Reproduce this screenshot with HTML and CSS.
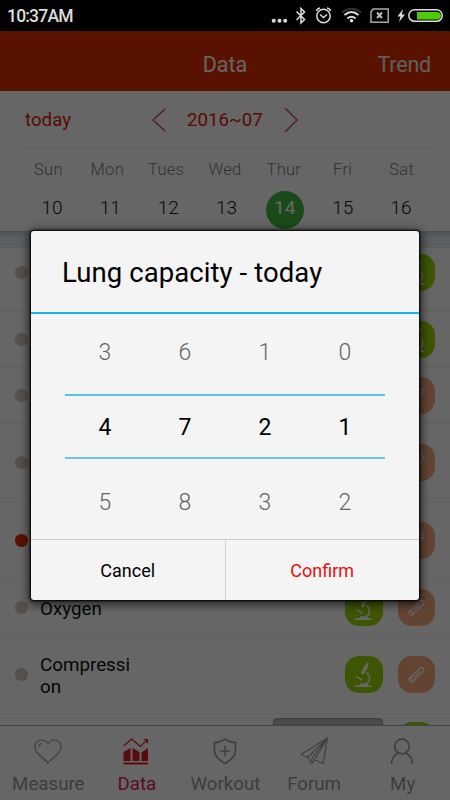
FILE: index.html
```html
<!DOCTYPE html>
<html lang="en">
<head>
<meta charset="utf-8">
<title>Data</title>
<link rel="stylesheet" href="styles.css">
</head>
<body>
<svg class="defs" width="0" height="0">
  <symbol id="microscope" viewBox="0 0 38 38">
    <path d="M21.500 10.500L18 17" stroke-width="3.400"/>
    <path d="M23 7.500L21.500 10.500" stroke-width="2.200"/>
    <path d="M22 17C26 20 26 25.500 21 29M12 21L17 24.200" stroke-width="1.500"/>
    <path d="M11 30.500H26M16 28.800H22" stroke-width="1.700"/>
  </symbol>
  <symbol id="pen" viewBox="0 0 38 38">
    <path d="M11.500 22.500L22.500 12Q24 11 25.500 12.500Q27 14 26 15.500L15 26Q13 27 11.500 25.500Q10.500 24 11.500 22.500ZM16 21.500L22.500 15.500M12 22.500Q14.500 22.500 15 25.500" stroke-width="1.300"/>
  </symbol>
</svg>
<div class="phone">
  <div class="status">
    <span class="time">10:37AM</span>
    <svg class="status-icons" viewBox="0 0 180 31" width="180" height="31">
      <g fill="#ddd"><circle cx="3.700" cy="20.700" r="2"/><circle cx="9.500" cy="20.700" r="2"/><circle cx="15.200" cy="20.700" r="2"/></g>
      <g fill="none" stroke="#ddd" stroke-width="1.500">
        <path d="M26.500 11.500L34.500 19.500L31 23V8.500L34.500 12L26.500 20"/>
        <circle cx="53.500" cy="16" r="6.700"/><path d="M50 14.500L53.500 17.500L57 14.500M46.500 11Q47 8.500 50 8M60.500 11Q60 8.500 57 8"/>
        <path d="M72 12.500Q81.500 5 91 12.500" stroke="#333" stroke-width="2"/>
        <path d="M74.500 15Q81.500 9 88.500 15M77.500 18.500Q81.500 15 85.500 18.500" stroke-width="2.100"/>
        <path d="M103 9H118.200V22.200H101V12Z" stroke="#aaa"/><path d="M107 12.500L112 18M112 12.500L107 18" stroke="#bbb" stroke-width="2"/>
        <rect x="138.800" y="9.800" width="33.500" height="11.500" rx="5.700"/>
      </g>
      <circle cx="81.500" cy="20.700" r="1.800" fill="#ddd"/>
      <path d="M133 9L127.500 16.500H130.500L129 22L135 14.500H131.800Z" fill="#ddd"/>
      <path d="M147 12H167.500Q171 12.500 171 15.500Q171 19 167.500 19.500H147Z" fill="#4ccc04"/>
    </svg>
  </div>
  <div class="app">
    <header class="bar"><span class="bar-title">Data</span><span class="bar-link">Trend</span></header>
    <section class="calendar">
      <div class="month">
        <span class="today">today</span>
        <svg class="prev" width="14" height="24" viewBox="0 0 14 24"><path d="M13 1L1 12L13 23"/></svg>
        <span class="period">2016~07</span>
        <svg class="next" width="14" height="24" viewBox="0 0 14 24"><path d="M1 0L13 12L1 24"/></svg>
      </div>
      <div class="weekdays"><span>Sun</span><span>Mon</span><span>Tues</span><span>Wed</span><span>Thur</span><span>Fri</span><span>Sat</span></div>
      <div class="days"><span>10</span><span>11</span><span>12</span><span>13</span><span class="selected">14</span><span>15</span><span>16</span></div>
    </section>
    <div class="gap"></div>
    <main class="list">
      <div class="row tall first"><i class="dot"></i><span class="name"></span><svg class="badge green end"><use href="#microscope"/></svg></div>
      <div class="row"><i class="dot"></i><span class="name"></span><svg class="badge green end"><use href="#microscope"/></svg></div>
      <div class="row"><i class="dot"></i><span class="name"></span><svg class="badge orange"><use href="#pen"/></svg></div>
      <div class="row tall"><i class="dot"></i><span class="name"></span><svg class="badge orange"><use href="#pen"/></svg></div>
      <div class="row tall"><i class="dot on"></i><span class="name"></span><svg class="badge orange"><use href="#pen"/></svg></div>
      <div class="row"><i class="dot"></i><span class="name">Oxygen</span><svg class="badge green"><use href="#microscope"/></svg><svg class="badge orange"><use href="#pen"/></svg></div>
      <div class="row tall"><i class="dot"></i><span class="name">Compressi<br>on</span><svg class="badge green"><use href="#microscope"/></svg><svg class="badge orange"><use href="#pen"/></svg></div>
      <div class="row last"><span class="chip"></span><svg class="badge green"></svg></div>
    </main>
    <nav class="tabs">
      <div class="tab"><svg width="30" height="30" viewBox="0 0 30 30"><path d="M15 27L4.500 17C-1 11 3 4 9 4Q13 4 15 7.500Q17 4 21 4C27 4 31 11 25.500 17ZM5.500 11Q6 8 9 7.500"/></svg><span>Measure</span></div>
      <div class="tab active"><svg width="30" height="30" viewBox="0 0 30 30"><path d="M2.500 10L10.500 3L19.500 10.500L26 4M22.500 3.500H26.500V7.500"/><path class="solid" d="M2.500 25V16L9.500 12V25ZM11.500 25V12L18.500 16V25ZM20.500 25V16.500L27 12V25ZM2.500 26.500H27V28.500H2.500Z"/></svg><span>Data</span></div>
      <div class="tab"><svg width="30" height="30" viewBox="0 0 30 30" class="bold"><path d="M15 3Q20 6.500 25.500 6.500V15Q25 22 15 27.500Q5 22 4.500 15V6.500Q10 6.500 15 3ZM15 10V20M10 15H20"/></svg><span>Workout</span></div>
      <div class="tab"><svg width="30" height="30" viewBox="0 0 30 30"><path d="M28.500 2L2 18.500L8.500 21.500L13 27.500L15.500 24L24 27.500ZM28.500 2L8.500 21.500M28.500 2L13 22.500V27.500M28.500 2L15.500 24"/></svg><span>Forum</span></div>
      <div class="tab"><svg width="30" height="30" viewBox="0 0 30 30" class="bold"><circle cx="15" cy="10.500" r="7.300"/><path d="M4.500 28Q4.500 20.500 11 17.300M25.500 28Q25.500 20.500 19 17.300"/></svg><span>My</span></div>
    </nav>
  </div>
  <div class="overlay">
    <div class="dialog">
      <h1 class="title">Lung capacity - today</h1>
      <div class="picker">
        <div class="digits faded up"><span>3</span><span>6</span><span>1</span><span>0</span></div>
        <div class="digits current"><span>4</span><span>7</span><span>2</span><span>1</span></div>
        <div class="digits faded down"><span>5</span><span>8</span><span>3</span><span>2</span></div>
      </div>
      <div class="actions"><span class="cancel">Cancel</span><span class="confirm">Confirm</span></div>
    </div>
  </div>
</div>
</body>
</html>
```
FILE: styles.css
```css
* { box-sizing: border-box; }
body { margin: 0; font-family: Roboto, "Liberation Sans", sans-serif; font-weight: 300; }
.defs { position: absolute; }
.phone { position: relative; width: 450px; height: 800px; overflow: hidden; display: flex; flex-direction: column; }
.status { height: 31px; flex: none; background: #000; display: flex; align-items: center; padding-left: 7px; }
.time { flex: 1; color: #ddd; font-size: 17.5px; font-weight: 500; line-height: 31px; padding-top: 1px; letter-spacing: -.8px; }
.app { flex: 1; min-height: 0; display: flex; flex-direction: column; background: #fff; }
.bar { height: 60px; flex: none; background: linear-gradient(#ce2700, #e22d00 4px); display: grid; grid-template-columns: 1fr auto 1fr; align-items: center; color: #fff; font-size: 21.5px; font-weight: 400; padding: 6px 19px 0; }
.bar-title { grid-column: 2; }
.bar-link { justify-self: end; color: #eee; letter-spacing: -.2px; }
.calendar { height: 140px; flex: none; }
.month { height: 57px; display: flex; align-items: center; padding-left: 25px; color: #dd2000; font-size: 18.7px; font-weight: 400; }
.month svg { fill: none; stroke: #c65070; stroke-width: 1.5; }
.today { width: 127px; }
.period { width: 76px; margin: 0 21px; white-space: nowrap; }
.weekdays, .days { display: flex; text-align: center; }
.weekdays span, .days span { flex: 1; }
.weekdays { border-top: 1px solid #f4f4f4; margin: 0 18px; padding: 11px 1px 0; color: #808080; font-size: 16.5px; line-height: 20px; letter-spacing: .3px; }
.days { padding: 10px 20px 0 23px; color: #111; font-size: 19px; line-height: 35px; }
.days .selected { flex: none; width: 38px; height: 38px; margin: 1px 10.1px 0; border-radius: 50%; background: #43b840; color: #fff; font-weight: 400; line-height: 33px; }
.gap { height: 16px; flex: none; background: linear-gradient(#c5c8cd, #e5edf3 7px); }
.list { flex: 1; min-height: 0; overflow: hidden; border-top: 1px solid #e0e0e0; }
.row { height: 56px; display: flex; align-items: center; padding: 0 15px; border-bottom: 1px solid #f0f0f0; }
.row.tall { height: 78px; }
.row.first { margin-top: -14px; }
.dot { width: 12.5px; height: 12.5px; border-radius: 50%; background: #d5c8be; flex: none; }
.dot.on { background: #e22d00; }
.name { flex: 1; padding: 3px 0 0 12.5px; color: #111; font-size: 18.8px; font-weight: 400; line-height: 22px; }
.badge { width: 37.5px; height: 37.5px; border-radius: 14px; margin-left: 15px; flex: none; fill: none; stroke: #fff; stroke-linecap: round; stroke-linejoin: round; }
.green { background: #9cd708; }
.orange { background: #f8aa80; }
.row.last { justify-content: flex-end; align-items: flex-start; padding-top: 4px; height: 60px; }
.chip { width: 110px; height: 40px; border-radius: 4px; background: #bbb; border: 1px solid #999; }
.last .badge { margin-top: 4px; }
.tabs { height: 75px; flex: none; display: flex; padding: 10px 3px 0 4px; border-top: 1px solid #aaa; background: #fff; }
.tab { flex: 1 1 0; min-width: 0; display: flex; flex-direction: column; align-items: center; color: #999; font-size: 18.7px; font-weight: 400; line-height: 22px; gap: 7px; }
.tab svg { fill: none; stroke: #a0a0a0; stroke-width: 1.2; flex: none; margin-left: -1px; }
.tab svg.bold { stroke-width: 1.7; }
.tab.active { color: #e0205c; }
.tab.active svg { stroke: #e02020; }
.tab .solid { fill: #e02020; stroke: none; }
.overlay { position: absolute; inset: 31px 0 0; background: rgba(0, 0, 0, .6); padding: 200px 31px; }
.dialog { height: 369px; background: #f4f4f4; border-radius: 3px; box-shadow: 0 0 2px 1px #000, 0 2px 9px 3px rgba(0,0,0,.6); display: flex; flex-direction: column; }
.title { margin: 0; height: 83px; border-bottom: 2.5px solid #16b1e8; padding-left: 31px; font-size: 27.5px; font-weight: 400; letter-spacing: .08px; line-height: 84px; color: #000; }
.picker { height: 225px; padding: 0 34px; text-align: center; font-size: 23px; }
.digits { display: flex; }
.digits span { flex: 1; }
.faded { height: 80px; line-height: 78px; color: #666; }
.down { line-height: 88px; }
.current { height: 65px; line-height: 64px; border-top: 2px solid #57c1e8; border-bottom: 2px solid #69c4e6; color: #000; font-weight: 400; }
.actions { flex: 1; display: flex; border-top: 1px solid #d0d0d0; text-align: center; font-size: 18px; font-weight: 400; line-height: 61px; }
.actions span { flex: 1; height: 60px; }
.cancel { border-right: 1px solid #d0d0d0; }
.confirm { color: #e81010; }
```
